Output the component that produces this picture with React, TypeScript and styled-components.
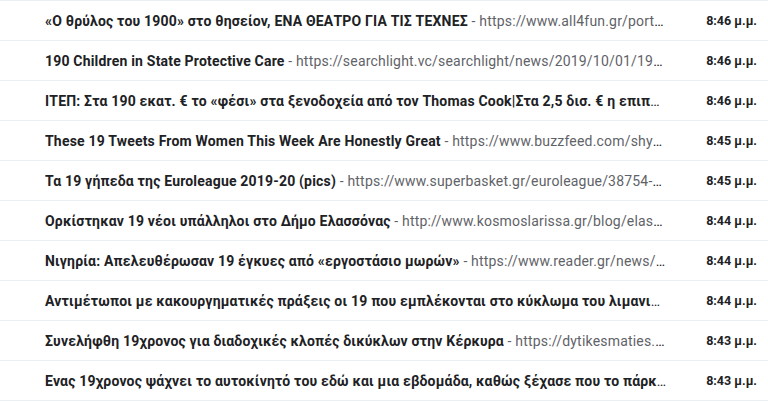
import React from "react";
import styled, { createGlobalStyle } from "styled-components";

const Global = createGlobalStyle`
  html, body { margin: 0; padding: 0; background: #fff; }
  body { font-family: Roboto, "Noto Sans", Arial, sans-serif; -webkit-font-smoothing: antialiased; }
`;

const List = styled.div`
  display: flex;
  flex-direction: column;
  width: 768px;
  border-top: 1px solid #eceff1;
`;

const Row = styled.div`
  display: flex;
  align-items: center;
  height: 39px;
  border-bottom: 1px solid #eceff1;
  padding-left: 45px;
  padding-right: 11px;
  color: #202124;
`;

const Content = styled.div`
  flex: 0 0 622px;
  font-size: 14px;
  letter-spacing: 0.19px;
  white-space: nowrap;
  overflow: hidden;
  text-overflow: ellipsis;
`;

const Subject = styled.span`
  font-weight: 700;
  color: #202124;
`;

const Snippet = styled.span`
  color: #5f6368;
`;

const Time = styled.div`
  flex: 1;
  text-align: right;
  font-weight: 700;
  font-size: 12.5px;
  color: #202124;
`;

type Item = { subject: string; snippet?: string; time: string };

const items: Item[] = [
  { subject: "«Ο θρύλος του 1900» στο θησείον, ΕΝΑ ΘΕΑΤΡΟ ΓΙΑ ΤΙΣ ΤΕΧΝΕΣ", snippet: "https://www.all4fun.gr/portal/theatro/o-thrylos-tou-1900", time: "8:46 μ.μ." },
  { subject: "190 Children in State Protective Care", snippet: "https://searchlight.vc/searchlight/news/2019/10/01/190-children", time: "8:46 μ.μ." },
  { subject: "ΙΤΕΠ: Στα 190 εκατ. € το «φέσι» στα ξενοδοχεία από τον Thomas Cook|Στα 2,5 δισ. € η επιπρόσθετη ζημιά", time: "8:46 μ.μ." },
  { subject: "These 19 Tweets From Women This Week Are Honestly Great", snippet: "https://www.buzzfeed.com/shymarie/tweets-from-women", time: "8:45 μ.μ." },
  { subject: "Τα 19 γήπεδα της Euroleague 2019-20 (pics)", snippet: "https://www.superbasket.gr/euroleague/38754-oi-19-gipeda", time: "8:45 μ.μ." },
  { subject: "Ορκίστηκαν 19 νέοι υπάλληλοι στο Δήμο Ελασσόνας", snippet: "http://www.kosmoslarissa.gr/blog/elassona", time: "8:44 μ.μ." },
  { subject: "Νιγηρία: Απελευθέρωσαν 19 έγκυες από «εργοστάσιο μωρών»", snippet: "https://www.reader.gr/news/kosmos", time: "8:44 μ.μ." },
  { subject: "Αντιμέτωποι με κακουργηματικές πράξεις οι 19 που εμπλέκονται στο κύκλωμα του λιμανιού της Πάτρας", time: "8:44 μ.μ." },
  { subject: "Συνελήφθη 19χρονος για διαδοχικές κλοπές δικύκλων στην Κέρκυρα", snippet: "https://dytikesmaties.gr/kerkyra", time: "8:43 μ.μ." },
  { subject: "Ενας 19χρονος ψάχνει το αυτοκίνητό του εδώ και μια εβδομάδα, καθώς ξέχασε που το πάρκαρε", time: "8:43 μ.μ." },
];

export default function App() {
  return (
    <>
      <Global />
      <List>
        {items.map((it, i) => (
          <Row key={i}>
            <Content>
              <Subject>{it.subject}</Subject>
              {it.snippet && <Snippet> - {it.snippet}</Snippet>}
            </Content>
            <Time>{it.time}</Time>
          </Row>
        ))}
      </List>
    </>
  );
}
